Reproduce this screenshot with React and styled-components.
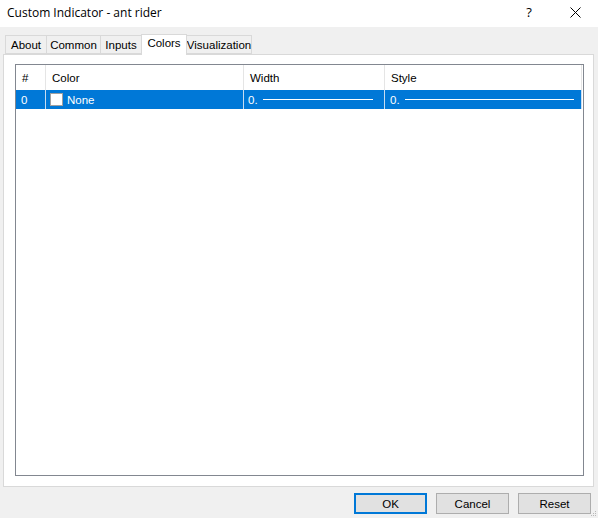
import React from 'react';
import styled, { createGlobalStyle } from 'styled-components';

const Global = createGlobalStyle`
  html, body { margin: 0; padding: 0; }
  body { background: #f0f0f0; }
`;

const Window = styled.div`
  width: 598px;
  height: 518px;
  background: #f0f0f0;
  display: flex;
  flex-direction: column;
  font-family: "Liberation Sans", Arial, sans-serif;
  font-size: 11px;
  color: #000;
  position: relative;
  overflow: hidden;
`;

const TitleBar = styled.div`
  height: 27px;
  background: #fff;
  display: flex;
  align-items: center;
  flex-shrink: 0;
`;

const Title = styled.div`
  flex: 1;
  padding-left: 7px;
  font-family: "Open Sans", "Noto Sans", sans-serif;
  font-size: 12px;
  padding-bottom: 3px;
`;

const TitleButton = styled.div`
  width: 46px;
  height: 27px;
  display: flex;
  align-items: center;
  justify-content: center;
  font-family: "Open Sans", sans-serif;
  font-size: 13px;
  padding-bottom: 3px;
  box-sizing: border-box;
`;

const Body = styled.div`
  flex: 1;
  display: flex;
  flex-direction: column;
  padding: 7px 4px 0 3px;
`;

const TabStrip = styled.div`
  display: flex;
  align-items: flex-end;
  padding-left: 2px;
  height: 20px;
  position: relative;
  z-index: 1;
`;

const Tab = styled.div`
  width: ${p => p.$w}px;
  height: ${p => (p.$active ? '21px' : '19px')};
  margin-bottom: ${p => (p.$active ? '-1px' : '0')};
  margin-right: -1px;
  box-sizing: border-box;
  border: 1px solid #d9d9d9;
  border-bottom: ${p => (p.$active ? 'none' : '1px solid #d9d9d9')};
  background: ${p => (p.$active ? '#fff' : '#f0f0f0')};
  display: flex;
  justify-content: center;
  align-items: ${p => (p.$active ? 'flex-start' : 'center')};
  padding-top: ${p => (p.$active ? '2px' : '1px')};
  font-size: 11.5px;
  position: relative;
  z-index: ${p => (p.$active ? 2 : 1)};
`;

const Panel = styled.div`
  width: 591px;
  height: 433px;
  box-sizing: border-box;
  border: 1px solid #d9d9d9;
  background: #fff;
  padding: 9px 9px 10px 11px;
  display: flex;
`;

const Table = styled.div`
  flex: 1;
  border: 1px solid #828790;
  background: #fff;
  display: flex;
  flex-direction: column;
`;

const Row = styled.div`
  display: grid;
  grid-template-columns: 30px 198px 141px 197px 1fr;
  height: ${p => p.$h}px;
  background: ${p => (p.$selected ? '#0078d7' : '#fff')};
  color: ${p => (p.$selected ? '#fff' : '#000')};
  margin-right: ${p => (p.$selected ? '1px' : '0')};
`;

const Cell = styled.div`
  display: flex;
  align-items: center;
  padding-left: ${p => p.$pl || 6}px;
  border-right: 1px solid ${p => (p.$selected ? '#c8dcf0' : '#e5e5e5')};
  overflow: hidden;
  white-space: nowrap;
  font-size: 11.5px;
`;

const Filler = styled.div``;

const Swatch = styled.span`
  display: inline-block;
  width: 11px;
  height: 11px;
  background: #fff;
  border: 1px solid #a0a0a0;
  margin-right: 4px;
`;

const LineSample = styled.span`
  display: inline-block;
  height: 1px;
  width: ${p => p.$w}px;
  background: #fff;
  margin-left: 5px;
`;

const Footer = styled.div`
  display: flex;
  justify-content: flex-end;
  gap: 9px;
  padding: 6px 3px 0 0;
`;

const Button = styled.div`
  width: 73px;
  height: 21px;
  box-sizing: border-box;
  background: #e1e1e1;
  border: ${p => (p.$default ? '2px solid #0078d7' : '1px solid #adadad')};
  display: flex;
  align-items: center;
  justify-content: center;
  font-size: 11.5px;
`;

const Grip = styled.svg`
  position: absolute;
  right: 1px;
  bottom: 1px;
`;

const tabs = [
  { label: 'About', w: 42 },
  { label: 'Common', w: 55 },
  { label: 'Inputs', w: 42 },
  { label: 'Colors', w: 46, active: true },
  { label: 'Visualization', w: 66 },
];

export default function App() {
  return (
    <Window>
      <Global />
      <TitleBar>
        <Title>Custom Indicator - ant rider</Title>
        <TitleButton>?</TitleButton>
        <TitleButton>
          <svg width="11" height="11" viewBox="0 0 11 11">
            <path d="M0.5 0.5 L10.5 10.5 M10.5 0.5 L0.5 10.5" stroke="#000" strokeWidth="1" />
          </svg>
        </TitleButton>
      </TitleBar>
      <Body>
        <TabStrip>
          {tabs.map(t => (
            <Tab key={t.label} $active={t.active} $w={t.w}>{t.label}</Tab>
          ))}
        </TabStrip>
        <Panel>
          <Table>
            <Row $h={25}>
              <Cell>#</Cell>
              <Cell>Color</Cell>
              <Cell>Width</Cell>
              <Cell>Style</Cell>
              <Filler />
            </Row>
            <Row $h={19} $selected>
              <Cell $selected $pl={5}>0</Cell>
              <Cell $selected $pl={4}><Swatch />None</Cell>
              <Cell $selected $pl={4}>0.<LineSample $w={110} /></Cell>
              <Cell $selected $pl={5}>0.<LineSample $w={169} /></Cell>
              <Filler />
            </Row>
          </Table>
        </Panel>
        <Footer>
          <Button $default>OK</Button>
          <Button>Cancel</Button>
          <Button>Reset</Button>
        </Footer>
      </Body>
      <Grip width="6" height="6" viewBox="0 0 6 6">
        <rect x="4" y="0" width="1" height="1" fill="#b8b8b8" />
        <rect x="2" y="2" width="1" height="1" fill="#b8b8b8" />
        <rect x="4" y="2" width="1" height="1" fill="#b8b8b8" />
        <rect x="0" y="4" width="1" height="1" fill="#b8b8b8" />
        <rect x="2" y="4" width="1" height="1" fill="#b8b8b8" />
        <rect x="4" y="4" width="1" height="1" fill="#b8b8b8" />
      </Grip>
    </Window>
  );
}
